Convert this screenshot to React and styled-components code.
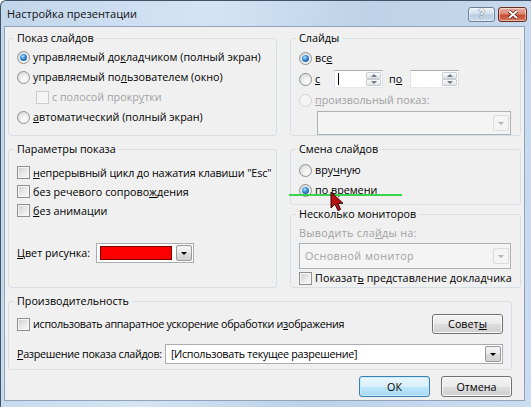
import React from "react";
import styled, { createGlobalStyle, css } from "styled-components";

const FONT = `"Open Sans", "Noto Sans", "Liberation Sans", sans-serif`;
const DISABLED = "#a2a2a2";

const GlobalStyle = createGlobalStyle`
  html, body { margin: 0; padding: 0; }
  body { background: #ffffff; font-family: ${FONT}; }
  *, *::before, *::after { box-sizing: border-box; }
`;

const Window = styled.div`
  position: relative;
  width: 531px;
  height: 407px;
  display: flex;
  flex-direction: column;
  overflow: hidden;
  border-top: 1px solid #3f5468;
  border-left: 1px solid #3f5468;
  border-top-left-radius: 6px;
  background: linear-gradient(100deg, #c2d6eb 0%, #d4e4f4 35%, #bdd2e8 62%, #cbdcef 100%);
  font-family: ${FONT};
  font-size: 10.75px;
  color: #000;
`;

const TitleBar = styled.div`
  flex: none;
  height: 25px;
  display: flex;
  align-items: center;
  justify-content: space-between;
  padding: 0 4px 0 6px;
`;

const Title = styled.div`
  font-size: 11px;
  color: #111;
`;

const Caption = styled.div`
  display: flex;
  gap: 3px;
  margin-top: 1px;
`;

const CaptionButton = styled.div`
  width: ${(p) => p.$w}px;
  height: 15px;
  border-radius: 3px;
  display: flex;
  align-items: center;
  justify-content: center;
  border: 1px solid ${(p) => (p.$close ? "#6e2b20" : "#6b8198")};
  background: ${(p) =>
    p.$close
      ? "linear-gradient(#eab0a2 0%, #d98a76 45%, #c5492f 55%, #d37b62 100%)"
      : "linear-gradient(#edf3fa 0%, #cfdeee 45%, #b7cbe1 55%, #cddcec 100%)"};
  box-shadow: inset 0 0 0 1px rgba(255, 255, 255, 0.45);
  color: #fff;
  font-weight: 700;
  font-size: 12px;
  line-height: 1;
  text-shadow: 0 0 1px #34495e, 0 0 1px #34495e;
`;

const Client = styled.div`
  flex: 1;
  margin: 0 6px 6px 3px;
  background: #f0f0f0;
  border: 1px solid #8ea3b9;
  padding: 4px 3px 3px 3px;
  display: flex;
  flex-direction: column;
  gap: 6px;
`;

const GroupRow = styled.div`
  display: flex;
  gap: 13px;
  height: ${(p) => p.$h}px;
`;

const Column = styled.div`
  flex: 1;
  min-width: 0;
  display: flex;
  flex-direction: column;
  gap: 2px;
`;

const Group = styled.fieldset`
  margin: 0 ${(p) => p.$mr || 0}px 0 0;
  min-width: 0;
  border: 1px solid #d5dfe5;
  border-radius: 3px;
  padding: ${(p) => p.$pt || 1}px ${(p) => p.$pr || 9}px 0 8px;
  height: ${(p) => (p.$h ? `${p.$h}px` : "auto")};
  width: ${(p) => (p.$w ? `${p.$w}px` : "auto")};
  flex: ${(p) => (p.$w || p.$h ? "none" : 1)};
  display: flex;
  flex-direction: column;
`;

const Legend = styled.legend`
  padding: 0 3px;
  margin-left: -3px;
  line-height: 15px;
  color: #000;
`;

const Row = styled.div`
  display: flex;
  align-items: center;
  height: ${(p) => p.$h || 20}px;
  margin-top: ${(p) => p.$mt || 0}px;
  padding-left: ${(p) => p.$indent || 0}px;
  gap: ${(p) => (p.$gap === undefined ? 3 : p.$gap)}px;
  white-space: nowrap;
  color: ${(p) => (p.$disabled ? DISABLED : "#000")};
`;

/* Segoe UI glyph widths differ from Open Sans, so a few strings get a touch of tracking */
const Text = styled.span`
  letter-spacing: ${(p) => p.$track || 0}px;
`;

const Key = styled.u`
  text-underline-offset: 1px;
`;

const Radio = styled.span`
  position: relative;
  flex: none;
  width: 13px;
  height: 13px;
  border-radius: 50%;
  border: 1px solid ${(p) => (p.$disabled ? "#d2d2d2" : "#8f9192")};
  background: ${(p) =>
    p.$disabled
      ? "#f5f5f5"
      : "radial-gradient(circle at 65% 70%, #fdfdfd 0%, #efefef 40%, #cfcfcf 100%)"};
  ${(p) =>
    p.$checked &&
    css`
      &::after {
        content: "";
        position: absolute;
        left: 2px;
        top: 2px;
        width: 7px;
        height: 7px;
        border-radius: 50%;
        background: radial-gradient(circle at 40% 35%, #b4e2ff 0%, #3a8fd8 40%, #0d3c7c 100%);
      }
    `}
`;

const Check = styled.span`
  flex: none;
  width: 13px;
  height: 13px;
  border: 1px solid ${(p) => (p.$disabled ? "#cbcbcb" : "#8f8f8f")};
  background: ${(p) =>
    p.$disabled
      ? "#f4f4f4"
      : "linear-gradient(135deg, #cdcdcd 0%, #e9e9e9 55%, #f9f9f9 100%)"};
  box-shadow: inset 0 0 0 1px #f6f6f6;
`;

const Label = styled.span`
  flex: none;
  width: ${(p) => (p.$w ? `${p.$w}px` : "auto")};
  margin-right: ${(p) => p.$mr || 0}px;
  letter-spacing: ${(p) => p.$track || 0}px;
`;

const Spin = styled.div`
  flex: none;
  display: flex;
  width: 49px;
  height: 18px;
  background: #fff;
  border: 1px solid;
  border-color: #abadb3 #dbdfe6 #e3e9ef #e2e3ea;
  padding: 1px;
`;

const SpinField = styled.div`
  flex: 1;
  display: flex;
  align-items: center;
  padding-left: 2px;
`;

const Caret = styled.span`
  width: 1px;
  height: 12px;
  background: #000;
`;

const SpinButtons = styled.div`
  width: 15px;
  display: flex;
  flex-direction: column;
`;

const SpinButton = styled.div`
  flex: 1;
  display: flex;
  align-items: center;
  justify-content: center;
  border: 1px solid #c9ced6;
  border-radius: 1px;
  background: linear-gradient(#fbfbfb, #e4e4e4);
`;

const Arrow = styled.span`
  width: 0;
  height: 0;
  border-left: ${(p) => p.$s || 3}px solid transparent;
  border-right: ${(p) => p.$s || 3}px solid transparent;
  ${(p) =>
    p.$up
      ? css`border-bottom: ${p.$s || 3}px solid ${p.$c || "#6a7a90"};`
      : css`border-top: ${p.$s || 3}px solid ${p.$c || "#6a7a90"};`}
`;

const Combo = styled.div`
  display: flex;
  align-items: center;
  height: 20px;
  flex: ${(p) => (p.$w ? "none" : 1)};
  width: ${(p) => (p.$w ? `${p.$w}px` : "auto")};
  margin-left: ${(p) => p.$ml || 0}px;
  margin-top: ${(p) => p.$mt || 0}px;
  padding: 1px;
  background: ${(p) => (p.$disabled ? "#f4f4f4" : "#fff")};
  border: 1px solid ${(p) => (p.$disabled ? "#adb2b5" : "#abadb3")};
  color: ${(p) => (p.$disabled ? DISABLED : "#000")};
  white-space: nowrap;
`;

const ComboText = styled.div`
  flex: 1;
  padding-left: 4px;
  overflow: hidden;
  letter-spacing: ${(p) => p.$track || 0}px;
`;

const Swatch = styled.div`
  flex: 1;
  height: 14px;
  margin: 0 4px 0 2px;
  background: #ff0000;
  border: 1px solid #7a0000;
`;

const DropButton = styled.div`
  flex: none;
  width: 16px;
  height: 16px;
  display: flex;
  align-items: center;
  justify-content: center;
  border-radius: 2px;
  border: 1px solid ${(p) => (p.$disabled ? "#dcdcdc" : "#9a9a9a")};
  background: ${(p) =>
    p.$disabled
      ? "#f4f4f4"
      : "linear-gradient(#f4f4f4 0%, #ebebeb 50%, #dcdcdc 51%, #d0d0d0 100%)"};
`;

const Button = styled.div`
  flex: none;
  width: ${(p) => p.$w || 71}px;
  height: ${(p) => p.$h || 21}px;
  margin-left: ${(p) => (p.$push ? "auto" : "0")};
  display: flex;
  align-items: center;
  justify-content: center;
  border-radius: 3px;
  border: 1px solid #707070;
  background: linear-gradient(#f2f2f2 0%, #ebebeb 50%, #dddddd 51%, #cfcfcf 100%);
  box-shadow: inset 0 0 0 1px #fbfbfb;
  color: #000;
  ${(p) =>
    p.$default &&
    css`
      border-color: #3c7fb1;
      background: linear-gradient(#eaf6fd 0%, #d9f0fc 50%, #bee6fd 51%, #a7d9f5 100%);
      box-shadow: inset 0 0 0 1px #c5ecfd;
    `}
`;

const ButtonBar = styled.div`
  display: flex;
  justify-content: flex-end;
  gap: 11px;
  padding-right: 9px;
`;

const GreenMark = styled.div`
  position: absolute;
  left: 288px;
  top: 193px;
  width: 113px;
  height: 2px;
  background: #38d54c;
`;

const Pointer = styled.svg`
  position: absolute;
  left: 329px;
  top: 190px;
`;

const RadioOption = ({ checked, disabled, children, w }) => (
  <Row $disabled={disabled} style={w ? { width: w } : undefined}>
    <Radio $checked={checked} $disabled={disabled} />
    <span>{children}</span>
  </Row>
);

const CheckOption = ({ disabled, children, indent, h, track }) => (
  <Row $disabled={disabled} $indent={indent} $h={h}>
    <Check $disabled={disabled} />
    <Text $track={track}>{children}</Text>
  </Row>
);

const SpinBox = ({ caret }) => (
  <Spin>
    <SpinField>{caret && <Caret />}</SpinField>
    <SpinButtons>
      <SpinButton>
        <Arrow $up $s={3} />
      </SpinButton>
      <SpinButton>
        <Arrow $s={3} />
      </SpinButton>
    </SpinButtons>
  </Spin>
);

export default function App() {
  return (
    <>
      <GlobalStyle />
      <Window>
        <TitleBar>
          <Title>Настройка презентации</Title>
          <Caption>
            <CaptionButton $w={27}>?</CaptionButton>
            <CaptionButton $w={29} $close>
              <svg width="12" height="9" viewBox="0 0 12 9">
                <path d="M2 1 L10 8 M10 1 L2 8" stroke="#5e1a12" strokeWidth="3.4" />
                <path d="M2 1 L10 8 M10 1 L2 8" stroke="#ffffff" strokeWidth="2" />
              </svg>
            </CaptionButton>
          </Caption>
        </TitleBar>

        <Client>
          <GroupRow $h={105}>
            <Group $w={269}>
              <Legend>Показ слайдов</Legend>
              <RadioOption checked>
                управляемый до<Key>к</Key>ладчиком (полный экран)
              </RadioOption>
              <RadioOption>
                управляемый по<Key>л</Key>ьзователем (окно)
              </RadioOption>
              <CheckOption disabled indent={19}>
                с полосой прокр<Key>у</Key>тки
              </CheckOption>
              <RadioOption>
                <Key>а</Key>втоматический (полный экран)
              </RadioOption>
            </Group>

            <Group>
              <Legend>Слайды</Legend>
              <Row $h={22}>
                <Radio $checked />
                <span>
                  вс<Key>е</Key>
                </span>
              </Row>
              <Row $h={20} $gap={0}>
                <RadioOption w={35}>
                  <Key>с</Key>
                </RadioOption>
                <SpinBox caret />
                <Label style={{ margin: "0 8px 0 6px" }}>
                  п<Key>о</Key>
                </Label>
                <SpinBox />
              </Row>
              <Row $h={22} $disabled>
                <Radio $disabled />
                <span>
                  <Key>п</Key>роизвольный показ:
                </span>
              </Row>
              <Combo $disabled $ml={18}>
                <ComboText />
                <DropButton $disabled>
                  <Arrow $c="#b4b4b4" $s={3.5} />
                </DropButton>
              </Combo>
            </Group>
          </GroupRow>

          <GroupRow $h={146}>
            <Group $w={269} $pt={6}>
              <Legend>Параметры показа</Legend>
              <CheckOption h={19} track={-0.12}>
                <Key>н</Key>епрерывный цикл до нажатия клавиши "Esc"
              </CheckOption>
              <CheckOption h={19}>
                без речевого сопрово<Key>ж</Key>дения
              </CheckOption>
              <CheckOption h={19}>
                <Key>б</Key>ез анимации
              </CheckOption>
              <Row $mt={23} $gap={0}>
                <Label $w={79}>
                  <Key>Ц</Key>вет рисунка:
                </Label>
                <Combo $w={98}>
                  <Swatch />
                  <DropButton>
                    <Arrow $c="#000" $s={3.5} />
                  </DropButton>
                </Combo>
              </Row>
            </Group>

            <Column>
              <Group $h={63} $pt={3}>
                <Legend>Смена слайдов</Legend>
                <RadioOption>
                  вру<Key>ч</Key>ную
                </RadioOption>
                <RadioOption checked>
                  по <Key>в</Key>ремени
                </RadioOption>
              </Group>
              <Group $pt={2}>
                <Legend>Несколько мониторов</Legend>
                <Row $h={18} $disabled>
                  <Text $track={0.3}>
                    Выводить сла<Key>й</Key>ды на:
                  </Text>
                </Row>
                <Combo $disabled $mt={1}>
                  <ComboText $track={0.45}>Основной монитор</ComboText>
                  <DropButton $disabled>
                    <Arrow $c="#b4b4b4" $s={3.5} />
                  </DropButton>
                </Combo>
                <CheckOption h={18} track={0.05}>
                  Показат<Key>ь</Key> представление докладчика
                </CheckOption>
              </Group>
            </Column>
          </GroupRow>

          <Group $h={76} $pt={5} $pr={8} $mr={9}>
            <Legend>Производительность</Legend>
            <Row>
              <Check />
              <Text $track={-0.3}>
                использовать аппаратное ускорение обработки и<Key>з</Key>ображения
              </Text>
              <Button $push $h={20}>
                Совет<Key>ы</Key>
              </Button>
            </Row>
            <Row $mt={10} $gap={0}>
              <Label $mr={3} $track={-0.3}>
                <Key>Р</Key>азрешение показа слайдов:
              </Label>
              <Combo>
                <ComboText $track={-0.3}>[Использовать текущее разрешение]</ComboText>
                <DropButton>
                  <Arrow $c="#000" $s={3.5} />
                </DropButton>
              </Combo>
            </Row>
          </Group>

          <ButtonBar>
            <Button $default>ОК</Button>
            <Button>Отмена</Button>
          </ButtonBar>
        </Client>

        <GreenMark />
        <Pointer width="14" height="21" viewBox="0 0 14 21">
          <path
            d="M1 1 L1 17 L5 13.2 L8 19.6 L10.6 18.5 L7.8 12.3 L13 12.3 Z"
            fill="#b81414"
            stroke="#3a0000"
            strokeWidth="1"
            strokeLinejoin="round"
          />
        </Pointer>
      </Window>
    </>
  );
}
